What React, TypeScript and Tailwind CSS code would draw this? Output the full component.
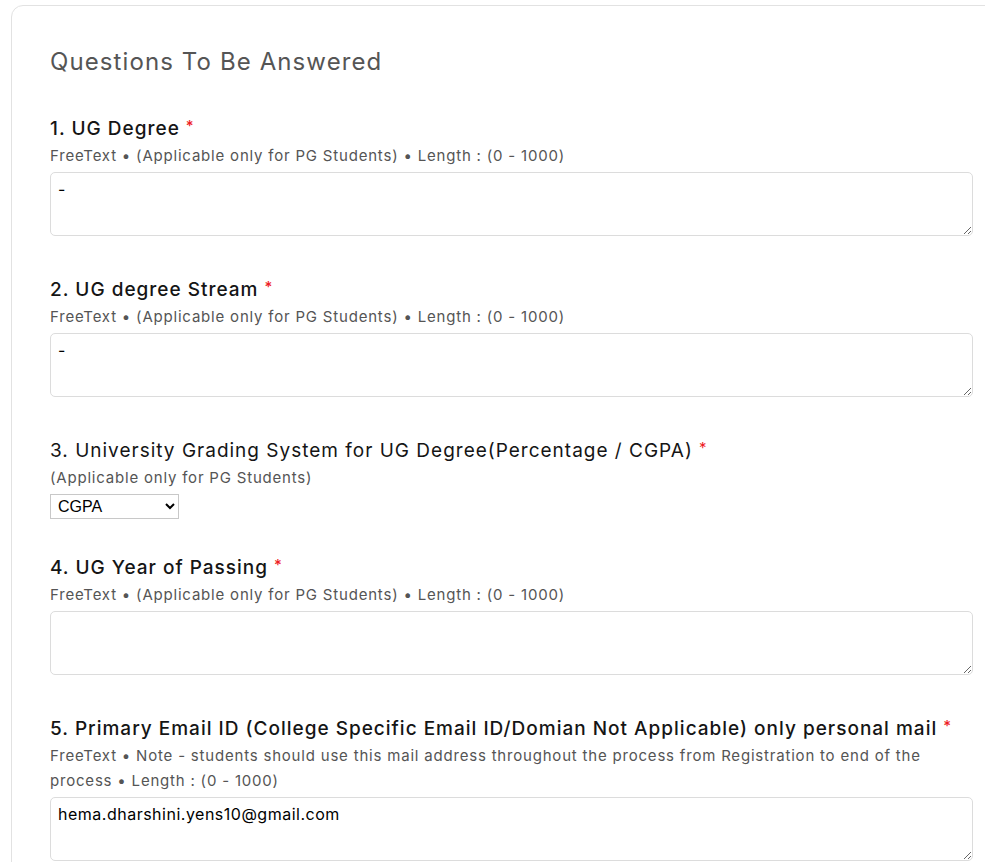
import React from "react";

interface Question {
  no: number;
  label: string;
  meta: string;
  kind: "text" | "select";
  value?: string;
  bold?: boolean;
}

const questions: Question[] = [
  {
    no: 1,
    label: "UG Degree",
    meta: "FreeText • (Applicable only for PG Students) • Length : (0 - 1000)",
    kind: "text",
    value: "-",
    bold: true,
  },
  {
    no: 2,
    label: "UG degree Stream",
    meta: "FreeText • (Applicable only for PG Students) • Length : (0 - 1000)",
    kind: "text",
    value: "-",
    bold: true,
  },
  {
    no: 3,
    label: "University Grading System for UG Degree(Percentage / CGPA)",
    meta: "(Applicable only for PG Students)",
    kind: "select",
    value: "CGPA",
  },
  {
    no: 4,
    label: "UG Year of Passing",
    meta: "FreeText • (Applicable only for PG Students) • Length : (0 - 1000)",
    kind: "text",
    value: "",
    bold: true,
  },
  {
    no: 5,
    label: "Primary Email ID (College Specific Email ID/Domian Not Applicable) only personal mail",
    meta: "FreeText • Note - students should use this mail address throughout the process from Registration to end of the process • Length : (0 - 1000)",
    kind: "text",
    value: "hema.dharshini.yens10@gmail.com",
    bold: true,
  },
];

const QuestionBlock = ({ q }: { q: Question }) => {
  return (
    <div className={`flex w-[923px] flex-col ${q.kind === "select" ? "-mb-[5px]" : ""}`}>
      <div
        className={`text-[19px] leading-[29px] tracking-[1px] text-[#151515] ${q.bold ? "font-medium" : "font-normal"}`}
      >
        {q.no}. {q.label}
        <sup className="relative -top-[4px] ml-[6px] text-[15px] text-[#ee1c25]">*</sup>
      </div>
      <div className="text-[15px] leading-[25px] tracking-[0.8px] text-[#555555]">{q.meta}</div>
      {q.kind === "text" ? (
        <textarea
          defaultValue={q.value}
          className="mt-[4px] block h-[64px] w-[923px] rounded-[5px] border border-[#dcdcdc] bg-white px-[7px] pb-[3px] pt-[4px] text-[16px] leading-[24px] tracking-[0.5px] text-black outline-none"
        />
      ) : (
        <select
          defaultValue={q.value}
          className="mt-[4px] block h-[25px] w-[129px] border border-[#c8c8c8] bg-white pl-[3px] text-[16px] text-black"
          style={{ fontFamily: '"Liberation Sans", Arial, sans-serif' }}
        >
          <option>CGPA</option>
          <option>Percentage</option>
        </select>
      )}
    </div>
  );
};

export default function App() {
  return (
    <div
      className="h-[862px] w-[985px] overflow-hidden bg-white"
      style={{ fontFamily: 'Inter, "Noto Sans", sans-serif' }}
    >
      <div className="ml-[11px] mt-[5px] min-h-[900px] w-[1010px] rounded-[12px] border border-[#e2e2e2] bg-white pl-[38px] pt-[38px]">
        <h2 className="text-[24px] leading-[36px] font-normal tracking-[1.1px] text-[#555555]">
          Questions To Be Answered
        </h2>
        <div className="mt-[34px] flex flex-col gap-[39px]">
          {questions.map((q) => (
            <QuestionBlock key={q.no} q={q} />
          ))}
        </div>
      </div>
    </div>
  );
}
